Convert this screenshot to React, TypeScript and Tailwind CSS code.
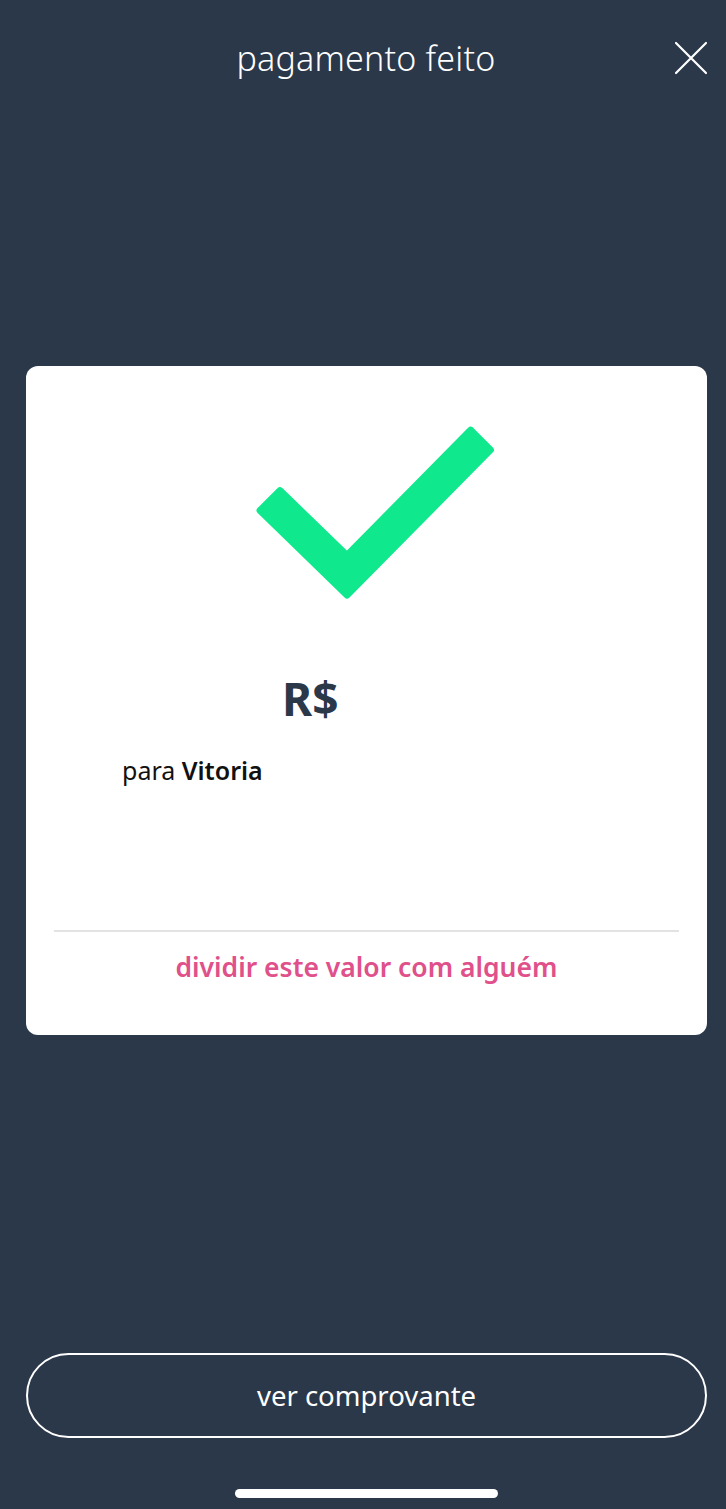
function CheckMark() {
  return (
    <svg width="270" height="210" viewBox="0 0 270 210" className="block">
      <polygon
        points="20.1,100.4 39.9,80.6 107,145.5 230.6,20.1 250.4,39.9 107,185.1"
        fill="#10e88d"
        stroke="#10e88d"
        strokeWidth="7"
        strokeLinejoin="round"
      />
    </svg>
  );
}

function CloseIcon() {
  return (
    <svg width="34" height="34" viewBox="0 0 34 34" className="block">
      <path d="M2 2 L32 32 M32 2 L2 32" stroke="white" strokeWidth="2.2" strokeLinecap="round" />
    </svg>
  );
}

export default function App() {
  return (
    <div
      className="w-[726px] h-[1509px] bg-[#2b384a] flex flex-col"
      style={{ fontFamily: '"Noto Sans", "Open Sans", sans-serif' }}
    >
      <header className="relative h-[118px] flex items-start justify-center pt-[35px] pl-[6px]">
        <h1 className="text-[34px] leading-[46px] font-light text-white tracking-[0.2px]">
          pagamento feito
        </h1>
        <button className="absolute right-[18px] top-[41px]">
          <CloseIcon />
        </button>
      </header>

      <div className="h-[248px]" />

      <section className="mx-[26px] w-[681px] h-[669px] bg-white rounded-[12px] flex flex-col">
        <div className="pl-[214px] pt-[44px]">
          <CheckMark />
        </div>
        <div className="pl-[256px] pt-[50px]">
          <span className="text-[46px] leading-[56px] font-bold text-[#2b384a]">R$</span>
        </div>
        <p className="pl-[96px] pt-[28px] text-[25px] leading-[32px] text-[#111]">
          para <span className="font-semibold">Vitoria</span>
        </p>
        <div className="flex-1" />
        <div className="mx-[28px] h-[2px] bg-[#e3e3e3]" />
        <div className="h-[103px] flex justify-center pt-[17px]">
          <span className="text-[26.5px] leading-[36px] font-semibold text-[#e0508a]">
            dividir este valor com alguém
          </span>
        </div>
      </section>

      <div className="flex-1" />

      <button className="mx-[26px] w-[681px] h-[85px] rounded-full border-2 border-white text-white text-[27.5px] flex items-center justify-center">
        ver comprovante
      </button>

      <div className="h-[71px] flex justify-center pt-[51px] pl-[7px]">
        <div className="w-[263px] h-[9px] rounded-full bg-white" />
      </div>
    </div>
  );
}
